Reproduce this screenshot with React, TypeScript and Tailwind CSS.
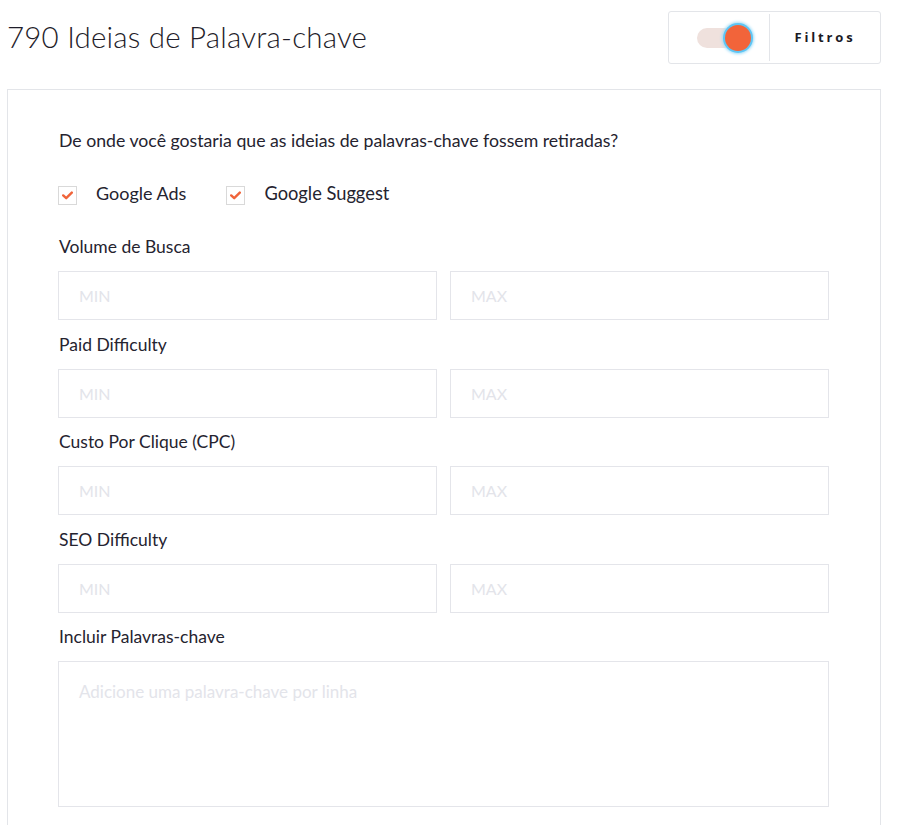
import React from "react";

function Check() {
  return (
    <span className="w-[19px] h-[19px] border border-[#d9d9d9] bg-white flex items-center justify-center">
      <svg width="11" height="9" viewBox="0 0 11 9">
        <path d="M1.2 4.4 L4.2 7.2 L9.8 1.6" stroke="#f0643a" strokeWidth="2.4" fill="none" strokeLinecap="round" strokeLinejoin="round" />
      </svg>
    </span>
  );
}

function Range({ label }: { label: string }) {
  return (
    <div className="flex flex-col">
      <div className="text-[17.5px] leading-[24px] text-[#25232f] h-[24px] ml-[1px]">{label}</div>
      <div className="grid grid-cols-2 gap-[13px] mt-[12px]">
        <input className="h-[49px] border border-[#e4e5ea] px-[20px] text-[16px] placeholder:text-[#e3e4ea] outline-none" placeholder="MIN" />
        <input className="h-[49px] border border-[#e4e5ea] px-[20px] text-[16px] placeholder:text-[#e3e4ea] outline-none" placeholder="MAX" />
      </div>
    </div>
  );
}

export default function App() {
  return (
    <div className="w-[900px] h-[825px] bg-white overflow-hidden font-['Lato',sans-serif] text-[#25232f]">
      <div className="flex items-start justify-between pl-[7px] pr-[19px] pt-[11px]">
        <h1 className="text-[29.5px] font-light leading-[52px] tracking-[0.2px] text-[#1f1d2a]">790 Ideias de Palavra-chave</h1>
        <div className="w-[213px] h-[53px] border border-[#e3e5e9] rounded-[3px] flex items-stretch">
          <div className="w-[100px] flex items-center pl-[28px]">
            <div className="relative w-[50px] h-[20px]">
              <div className="absolute left-0 top-0 w-[40px] h-[20px] rounded-full bg-[#efe1dd]"></div>
              <div className="absolute left-[28px] top-[-3px] w-[26px] h-[26px] rounded-full bg-[#f2643a] shadow-[0_0_0_2px_#5ec6f5,0_0_3px_3px_#9fdcf8]"></div>
            </div>
          </div>
          <div className="w-px bg-[#e3e5e9] my-[2px]"></div>
          <div className="flex-1 flex items-center justify-center font-['Open_Sans',sans-serif] font-bold text-[13px] tracking-[0.22em] text-[#1a1a24]">Filtros</div>
        </div>
      </div>
      <div className="mt-[25px] ml-[7px] w-[874px] h-[800px] border border-[#e3e5e9] pl-[50px] pr-[51px] pt-[39px]">
        <div className="text-[17.7px] leading-[24px] ml-[1px]">De onde você gostaria que as ideias de palavras-chave fossem retiradas?</div>
        <div className="flex items-start mt-[28px] h-[24px]">
          <label className="flex items-start">
            <span className="mt-[5px]"><Check /></span>
            <span className="ml-[19px] text-[18px] leading-[24px]">Google Ads</span>
          </label>
          <label className="flex items-start ml-[40px]">
            <span className="mt-[5px]"><Check /></span>
            <span className="ml-[19px] text-[18.3px] leading-[24px]">Google Suggest</span>
          </label>
        </div>
        <div className="flex flex-col gap-[12.5px] mt-[30px]">
          <Range label="Volume de Busca" />
          <Range label="Paid Difficulty" />
          <Range label="Custo Por Clique (CPC)" />
          <Range label="SEO Difficulty" />
          <div className="flex flex-col">
            <div className="text-[17.5px] leading-[24px] h-[24px] ml-[1px]">Incluir Palavras-chave</div>
            <textarea className="mt-[12px] h-[146px] border border-[#e4e5ea] px-[20px] py-[17px] text-[17px] placeholder:text-[#e3e4ea] outline-none resize-none" placeholder="Adicione uma palavra-chave por linha" />
          </div>
        </div>
      </div>
    </div>
  );
}
